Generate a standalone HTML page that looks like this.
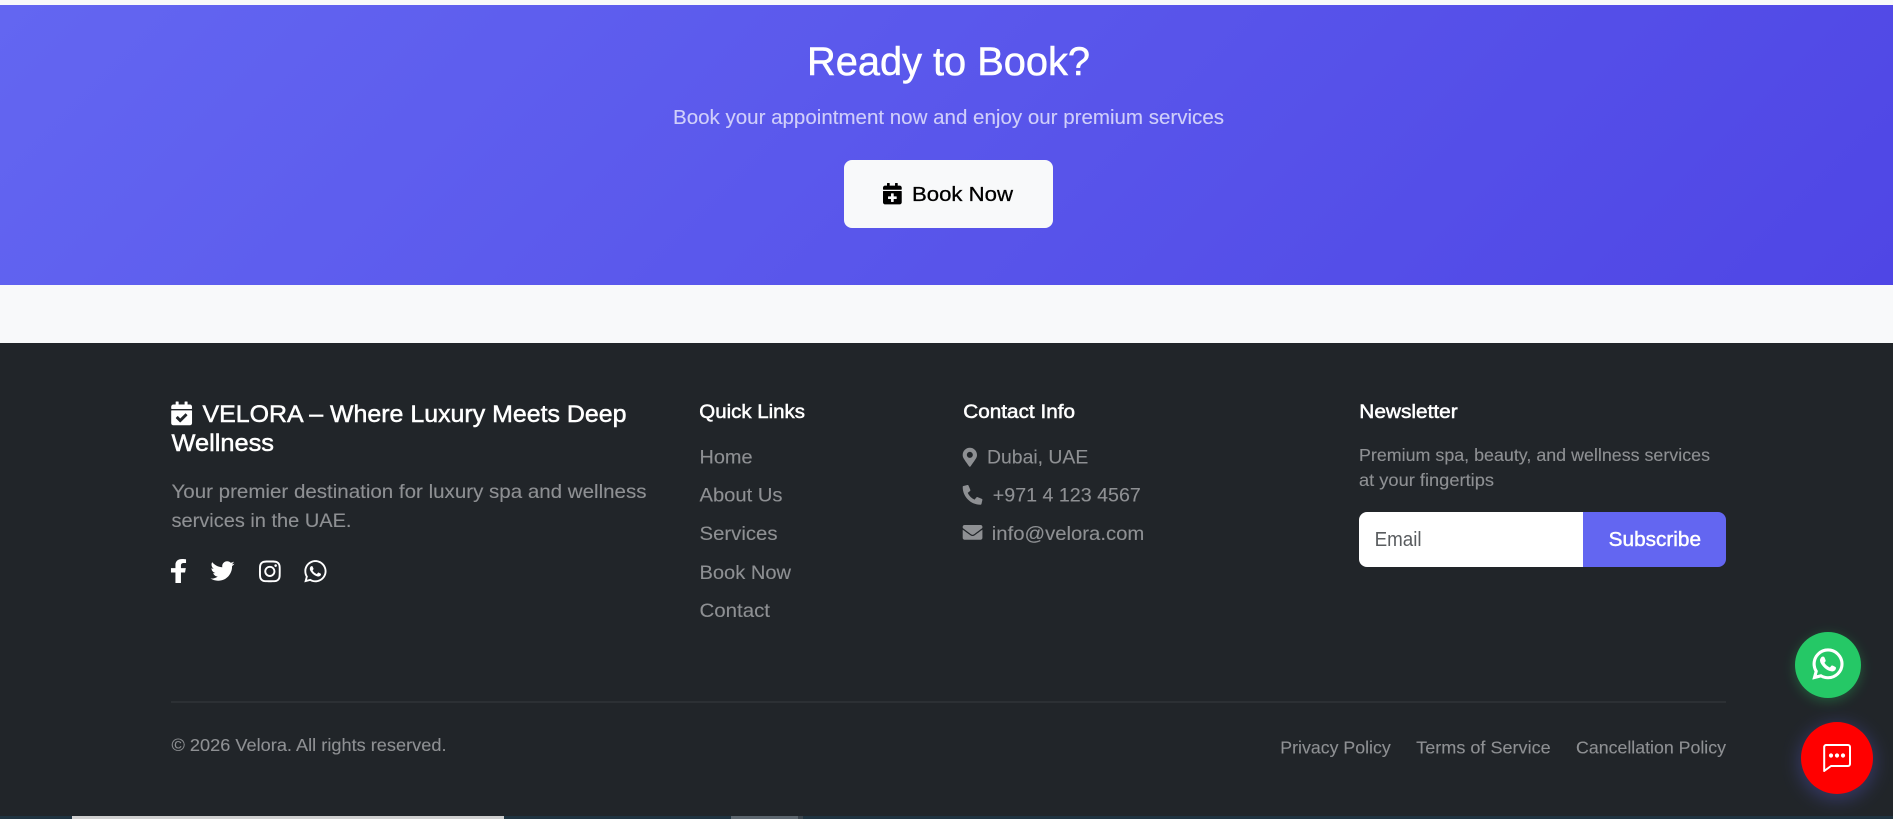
<!DOCTYPE html>
<html lang="en"><head><meta charset="utf-8"><title>Velora</title>
<style>
html,body{margin:0;padding:0;width:1893px;height:819px;overflow:hidden;background:#f8f9fa}
svg{display:block;position:absolute;left:0;top:0}
text{font-family:"Liberation Sans",sans-serif;white-space:pre}
.m{fill:#8e9093;stroke:#8e9093;stroke-width:.12px}
.h{fill:#fff;stroke:#fff;stroke-width:.5px}
</style></head><body>
<svg width="1893" height="819" viewBox="0 0 1893 819" xmlns="http://www.w3.org/2000/svg">
<defs>
<linearGradient id="g2" gradientUnits="userSpaceOnUse" x1="403" y1="-398" x2="1490" y2="688"><stop offset="0" stop-color="#6366f1"/><stop offset="1" stop-color="#4f46e5"/></linearGradient>
<filter id="s1" x="-50%" y="-50%" width="200%" height="200%"><feGaussianBlur stdDeviation="6"/></filter>
<filter id="s2" x="-50%" y="-50%" width="200%" height="200%"><feGaussianBlur stdDeviation="9"/></filter>
<path id="wa" d="M380.9 97.1C339 55.1 283.2 32 223.9 32c-122.4 0-222 99.6-222 222 0 39.1 10.2 77.3 29.6 111L0 480l117.7-30.9c32.4 17.7 68.9 27 106.1 27h.1c122.3 0 224.1-99.6 224.1-222 0-59.3-25.2-115-67.1-157zm-157 341.6c-33.2 0-65.7-8.9-94-25.7l-6.7-4-69.8 18.3L72 359.2l-4.4-7c-18.5-29.4-28.2-63.3-28.2-98.2 0-101.7 82.8-184.5 184.6-184.5 49.3 0 95.6 19.2 130.4 54.1 34.8 34.9 56.2 81.2 56.1 130.5 0 101.8-84.9 184.6-186.6 184.6zm101.2-138.2c-5.5-2.8-32.8-16.2-37.9-18-5.1-1.9-8.8-2.8-12.5 2.8-3.7 5.6-14.3 18-17.6 21.8-3.2 3.7-6.5 4.2-12 1.4-32.6-16.3-54-29.1-75.5-66-5.7-9.8 5.7-9.1 16.3-30.3 1.8-3.7.9-6.9-.5-9.7-1.4-2.8-12.5-30.1-17.1-41.2-4.5-10.8-9.1-9.3-12.5-9.5-3.2-.2-6.9-.2-10.6-.2-3.7 0-9.7 1.4-14.8 6.9-5.1 5.6-19.4 19-19.4 46.3 0 27.3 19.9 53.7 22.6 57.4 2.8 3.7 39.1 59.7 94.8 83.8 35.2 15.2 49 16.5 66.6 13.9 10.7-1.6 32.8-13.4 37.4-26.4 4.6-13 4.6-24.1 3.2-26.4-1.3-2.5-5-3.9-10.5-6.6z"/>
</defs>

<!-- page -->
<rect width="1893" height="819" fill="#f8f9fa"/>

<!-- hero -->
<rect x="0" y="5" width="1893" height="280" fill="url(#g2)"/>
<text x="807" y="75" font-size="40" textLength="283" lengthAdjust="spacingAndGlyphs" class="h">Ready to Book?</text>
<text x="673" y="124" font-size="20" textLength="551" lengthAdjust="spacingAndGlyphs" fill="#cfcefa" stroke="#cfcefa" stroke-width=".12">Book your appointment now and enjoy our premium services</text>
<rect x="844" y="160" width="209" height="68" rx="8" fill="#f8f9fa"/>
<g transform="translate(883 183) scale(.0418)" fill="#000"><path d="M436 160H12c-6.6 0-12-5.4-12-12v-36c0-26.5 21.5-48 48-48h48V12c0-6.6 5.4-12 12-12h40c6.6 0 12 5.4 12 12v52h128V12c0-6.6 5.4-12 12-12h40c6.6 0 12 5.4 12 12v52h48c26.5 0 48 21.5 48 48v36c0 6.6-5.4 12-12 12zM12 192h424c6.6 0 12 5.4 12 12v260c0 26.5-21.5 48-48 48H48c-26.5 0-48-21.5-48-48V204c0-6.6 5.4-12 12-12zm316 140c0-6.6-5.4-12-12-12h-60v-60c0-6.6-5.4-12-12-12h-40c-6.6 0-12 5.4-12 12v60h-60c-6.6 0-12 5.4-12 12v40c0 6.6 5.4 12 12 12h60v60c0 6.6 5.4 12 12 12h40c6.6 0 12-5.4 12-12v-60h60c6.6 0 12-5.4 12-12v-40z"/></g>
<text x="912" y="201" font-size="20.5" textLength="101" lengthAdjust="spacingAndGlyphs" fill="#000" stroke="#000" stroke-width=".3">Book Now</text>

<!-- footer -->
<rect x="0" y="343" width="1893" height="476" fill="#212529"/>

<!-- brand -->
<g transform="translate(171.2 401.5) scale(.0465)" fill="#fff"><path d="M436 160H12c-6.627 0-12-5.373-12-12v-36c0-26.51 21.49-48 48-48h48V12c0-6.627 5.373-12 12-12h40c6.627 0 12 5.373 12 12v52h128V12c0-6.627 5.373-12 12-12h40c6.627 0 12 5.373 12 12v52h48c26.51 0 48 21.49 48 48v36c0 6.627-5.373 12-12 12zM12 192h424c6.627 0 12 5.373 12 12v260c0 26.51-21.49 48-48 48H48c-26.51 0-48-21.49-48-48V204c0-6.627 5.373-12 12-12zm333.296 95.947l-28.169-28.398c-4.667-4.705-12.265-4.736-16.97-.068L194.12 364.665l-45.98-46.352c-4.667-4.705-12.266-4.736-16.971-.068l-28.397 28.17c-4.705 4.667-4.736 12.265-.068 16.97l82.601 83.269c4.667 4.705 12.265 4.736 16.97.068l142.953-141.805c4.705-4.667 4.736-12.265.068-16.97z"/></g>
<text x="202.5" y="422" font-size="24" textLength="424" lengthAdjust="spacingAndGlyphs" class="h">VELORA – Where Luxury Meets Deep</text>
<text x="171.5" y="451" font-size="24" textLength="102.5" lengthAdjust="spacingAndGlyphs" class="h">Wellness</text>
<text x="171.5" y="498" font-size="19.2" textLength="475" lengthAdjust="spacingAndGlyphs" class="m">Your premier destination for luxury spa and wellness</text>
<text x="171.5" y="527" font-size="19.2" textLength="180" lengthAdjust="spacingAndGlyphs" class="m">services in the UAE.</text>

<!-- social -->
<g fill="#fff">
<g transform="translate(169.7 559) scale(.055 .0469)"><path d="M279.14 288l14.22-92.66h-88.91v-60.13c0-25.35 12.42-50.06 52.24-50.06h40.42V6.26S260.43 0 225.36 0c-73.22 0-121.08 44.38-121.08 124.72v70.62H22.89V288h81.39v224h100.17V288z"/></g>
<g transform="translate(210.5 559) scale(.0469)"><path d="M459.37 151.716c.325 4.548.325 9.097.325 13.645 0 138.72-105.583 298.558-298.558 298.558-59.452 0-114.68-17.219-161.137-47.106 8.447.974 16.568 1.299 25.34 1.299 49.055 0 94.213-16.568 130.274-44.832-46.132-.975-84.792-31.188-98.112-72.772 6.498.974 12.995 1.624 19.818 1.624 9.421 0 18.843-1.3 27.614-3.573-48.081-9.747-84.143-51.98-84.143-102.985v-1.299c13.969 7.797 30.214 12.67 47.431 13.319-28.264-18.843-46.781-51.005-46.781-87.391 0-19.492 5.197-37.36 14.294-52.954 51.655 63.675 129.3 105.258 216.365 109.807-1.624-7.797-2.599-15.918-2.599-24.04 0-57.828 46.782-104.934 104.934-104.934 30.213 0 57.502 12.67 76.67 33.137 23.715-4.548 46.456-13.32 66.599-25.34-7.798 24.366-24.366 44.833-46.132 57.827 21.117-2.273 41.584-8.122 60.426-16.243-14.292 20.791-32.161 39.308-52.628 54.253z"/></g>
<g transform="translate(259 559) scale(.0484)"><path d="M224.1 141c-63.6 0-114.9 51.3-114.9 114.9s51.3 114.9 114.9 114.9S339 319.5 339 255.9 287.7 141 224.1 141zm0 189.6c-41.1 0-74.7-33.5-74.7-74.7s33.5-74.7 74.7-74.7 74.7 33.5 74.7 74.7-33.6 74.7-74.7 74.7zm146.4-194.3c0 14.9-12 26.8-26.8 26.8-14.9 0-26.8-12-26.8-26.8s12-26.8 26.8-26.8 26.8 12 26.8 26.8zm76.1 27.2c-1.7-35.9-9.9-67.7-36.2-93.9-26.2-26.2-58-34.4-93.9-36.2-37-2.1-147.9-2.1-184.9 0-35.8 1.7-67.6 9.9-93.9 36.1s-34.4 58-36.2 93.9c-2.1 37-2.1 147.9 0 184.9 1.7 35.9 9.9 67.7 36.2 93.9s58 34.4 93.9 36.2c37 2.1 147.9 2.1 184.9 0 35.9-1.7 67.7-9.9 93.9-36.2 26.2-26.2 34.4-58 36.2-93.9 2.1-37 2.1-147.8 0-184.8zM398.8 388c-7.8 19.6-22.9 34.7-42.6 42.6-29.5 11.7-99.5 9-132.1 9s-102.7 2.6-132.1-9c-19.6-7.8-34.7-22.9-42.6-42.6-11.7-29.5-9-99.5-9-132.1s-2.6-102.7 9-132.1c7.8-19.6 22.9-34.7 42.6-42.6 29.5-11.7 99.5-9 132.1-9s102.7-2.6 132.1 9c19.6 7.8 34.7 22.9 42.6 42.6 11.7 29.5 9 99.5 9 132.1s2.7 102.7-9 132.1z"/></g>
<g transform="translate(304.3 558.6) scale(.0496)"><use href="#wa"/></g>
</g>

<!-- quick links -->
<text x="699.3" y="418" font-size="19.2" textLength="105.7" lengthAdjust="spacingAndGlyphs" class="h">Quick Links</text>
<text x="699.5" y="463.5" font-size="19.2" textLength="53" lengthAdjust="spacingAndGlyphs" class="m">Home</text>
<text x="699.5" y="501.7" font-size="19.2" textLength="83" lengthAdjust="spacingAndGlyphs" class="m">About Us</text>
<text x="699.5" y="540" font-size="19.2" textLength="78" lengthAdjust="spacingAndGlyphs" class="m">Services</text>
<text x="699.5" y="579" font-size="19.2" textLength="91.5" lengthAdjust="spacingAndGlyphs" class="m">Book Now</text>
<text x="699.5" y="617" font-size="19.2" textLength="70.5" lengthAdjust="spacingAndGlyphs" class="m">Contact</text>

<!-- contact -->
<text x="963.3" y="418" font-size="19.2" textLength="111.7" lengthAdjust="spacingAndGlyphs" class="h">Contact Info</text>
<g fill="#8e9093">
<g transform="translate(962.7 447.7) scale(.0372)"><path d="M172.268 501.67C26.97 291.031 0 268.413 0 192 0 85.961 85.961 0 192 0s192 85.961 192 192c0 76.413-26.97 99.031-172.268 309.67-9.535 13.774-29.93 13.773-39.464 0zM192 272c44.183 0 80-35.817 80-80s-35.817-80-80-80-80 35.817-80 80 35.817 80 80 80z"/></g>
<g transform="translate(962.7 485) scale(.0385)"><path d="M497.39 361.8l-112-48a24 24 0 0 0-28 6.9l-49.6 60.6A370.66 370.66 0 0 1 130.6 204.11l60.6-49.6a23.94 23.94 0 0 0 6.9-28l-48-112A24.16 24.16 0 0 0 122.6.61l-104 24A24 24 0 0 0 0 48c0 256.5 207.9 464 464 464a24 24 0 0 0 23.4-18.6l24-104a24.29 24.29 0 0 0-14.01-27.6z"/></g>
<g transform="translate(962.7 522.5) scale(.0385)"><path d="M502.3 190.8c3.9-3.1 9.7-.2 9.7 4.7V400c0 26.5-21.5 48-48 48H48c-26.5 0-48-21.5-48-48V195.6c0-5 5.7-7.8 9.7-4.7 22.4 17.4 52.1 39.5 154.1 113.6 21.1 15.4 56.7 47.8 92.2 47.6 35.7.3 72-32.8 92.3-47.6 102-74.1 131.6-96.3 154-113.7zM256 320c23.2.4 56.6-29.2 73.4-41.4 132.7-96.3 142.8-104.7 173.4-128.7 5.8-4.5 9.2-11.5 9.2-18.9v-19c0-26.5-21.5-48-48-48H48C21.5 64 0 85.5 0 112v19c0 7.4 3.4 14.3 9.2 18.9 30.6 23.9 40.7 32.4 173.4 128.7 16.8 12.2 50.2 41.8 73.4 41.4z"/></g>
</g>
<text x="987" y="463.5" font-size="19.2" textLength="101.3" lengthAdjust="spacingAndGlyphs" class="m">Dubai, UAE</text>
<text x="992.8" y="501.7" font-size="19.2" textLength="148" lengthAdjust="spacingAndGlyphs" class="m">+971 4 123 4567</text>
<text x="991.8" y="540" font-size="19.2" textLength="152.5" lengthAdjust="spacingAndGlyphs" class="m">info@velora.com</text>

<!-- newsletter -->
<text x="1359.3" y="418" font-size="19.2" textLength="98.4" lengthAdjust="spacingAndGlyphs" class="h">Newsletter</text>
<text x="1359" y="461" font-size="17.6" textLength="351" lengthAdjust="spacingAndGlyphs" class="m">Premium spa, beauty, and wellness services</text>
<text x="1359" y="486" font-size="17.6" textLength="135" lengthAdjust="spacingAndGlyphs" class="m">at your fingertips</text>
<path d="M1367 512H1583V567H1367a8 8 0 0 1-8-8V520a8 8 0 0 1 8-8z" fill="#fff"/>
<path d="M1583 512H1718a8 8 0 0 1 8 8V559a8 8 0 0 1-8 8H1583z" fill="#6366f1"/>
<text x="1374.6" y="546" font-size="20" textLength="47" lengthAdjust="spacingAndGlyphs" fill="#595c5f">Email</text>
<text x="1608.7" y="546" font-size="20" textLength="92.3" lengthAdjust="spacingAndGlyphs" fill="#fff" stroke="#fff" stroke-width=".45">Subscribe</text>

<!-- divider + bottom -->
<rect x="171" y="701.5" width="1555" height="1" fill="#373b3f"/>
<text x="171.5" y="751" font-size="17.6" textLength="275" lengthAdjust="spacingAndGlyphs" class="m">© 2026 Velora. All rights reserved.</text>
<text x="1280.3" y="753.3" font-size="17.6" textLength="110.4" lengthAdjust="spacingAndGlyphs" class="m">Privacy Policy</text>
<text x="1416.2" y="753.3" font-size="17.6" textLength="134.5" lengthAdjust="spacingAndGlyphs" class="m">Terms of Service</text>
<text x="1576" y="753.3" font-size="17.6" textLength="150" lengthAdjust="spacingAndGlyphs" class="m">Cancellation Policy</text>

<!-- floating buttons -->
<circle cx="1828" cy="668" r="33" fill="#25d366" opacity=".3" filter="url(#s1)"/>
<circle cx="1828" cy="665" r="33" fill="#25c866"/>
<g transform="translate(1812.7 646.5) scale(.0683)" fill="#fff" stroke="#fff" stroke-width="8"><use href="#wa"/></g>
<circle cx="1837" cy="762" r="38" fill="#6366f1" opacity=".3" filter="url(#s2)"/>
<circle cx="1837" cy="758" r="36" fill="#ff0000"/>
<path d="M1826.5 745H1848a2 2 0 0 1 2 2V764a2 2 0 0 1-2 2H1831L1824.2 771V747a2 2 0 0 1 2.3-2z" fill="none" stroke="#fff" stroke-width="2" stroke-linejoin="round"/>
<circle cx="1831" cy="755.5" r="2.1" fill="#fff"/><circle cx="1837" cy="755.5" r="2.1" fill="#fff"/><circle cx="1843" cy="755.5" r="2.1" fill="#fff"/>

<!-- bottom strip -->
<rect x="0" y="816" width="1893" height="3" fill="#1f3340"/>
<rect x="72" y="816" width="432" height="3" fill="#cfcfcf"/>
<rect x="731" y="816" width="67" height="3" fill="#5c666e"/>
<rect x="798" y="816" width="5" height="3" fill="#3a444c"/>
</svg>
</body></html>
